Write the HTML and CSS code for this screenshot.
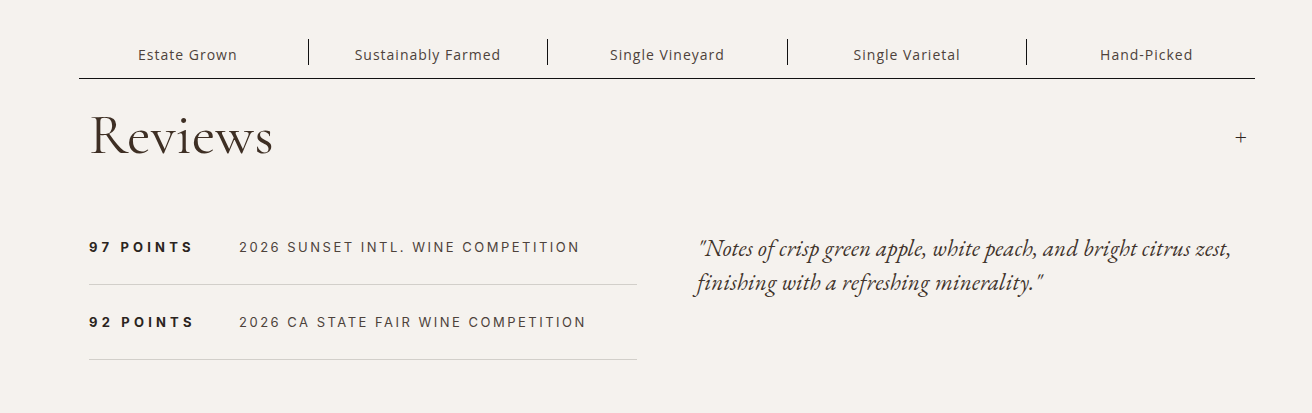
FILE: index.html
```html
<!DOCTYPE html>
<html lang="en">
<head>
  <meta charset="UTF-8">
  <meta name="viewport" content="width=device-width, initial-scale=1.0">
  <title>Reviews</title>
  <link rel="stylesheet" href="styles.css">
</head>
<body>
  <div class="page">

    <!-- Attributi del vino -->
    <div class="attributes">
      <ul class="attr-list">
        <li>Estate Grown</li>
        <li>Sustainably Farmed</li>
        <li>Single Vineyard</li>
        <li>Single Varietal</li>
        <li>Hand-Picked</li>
      </ul>
    </div>

    <!-- Sezione recensioni -->
    <section class="reviews">
      <div class="reviews-head">
        <h2>Reviews</h2>
        <span class="toggle">+</span>
      </div>

      <div class="reviews-body">
        <div class="awards">
          <div class="award">
            <div class="points">97 Points</div>
            <div class="contest">2026 Sunset Intl. Wine Competition</div>
          </div>
          <div class="award">
            <div class="points">92 Points</div>
            <div class="contest">2026 CA State Fair Wine Competition</div>
          </div>
        </div>

        <blockquote class="quote">"Notes of crisp green apple, white peach, and bright citrus zest, finishing with a refreshing minerality."</blockquote>
      </div>
    </section>

  </div>
</body>
</html>
```

FILE: styles.css
```css
body {
  margin: 0;
  background-color: #f5f2ee;
  color: #3f332b;
  font-family: "Open Sans", Arial, sans-serif;
}

.page {
  padding: 0 57px 0 79px;
}

/* Barra attributi */
.attributes {
  padding-top: 39px;
  height: 39px;
  border-bottom: 1px solid #111;
}

.attr-list {
  list-style: none;
  margin: 0 -11px;
  padding: 0;
  display: grid;
  grid-template-columns: repeat(5, 1fr);
}

.attr-list li {
  height: 20px;
  padding-top: 6px;
  text-align: center;
  font-size: 14px;
  letter-spacing: 1px;
  color: #4d423b;
  line-height: 20px;
}

.attr-list li + li {
  border-left: 1px solid #111;
}

/* Recensioni */
.reviews {
  padding: 0 8px 0 10px;
}

.reviews-head {
  display: flex;
  justify-content: space-between;
  align-items: center;
  height: 115px;
}

.reviews-head h2 {
  margin: 0;
  font-family: "Cormorant Garamond", "EB Garamond", "Liberation Serif", serif;
  font-weight: normal;
  font-size: 58px;
  color: #3e2f24;
  margin-bottom: 4px;
}

.toggle {
  font-size: 22px;
  font-weight: 300;
  color: #2f2620;
  margin-bottom: 2px;
}

.reviews-body {
  display: grid;
  grid-template-columns: 548px 1fr;
  column-gap: 58px;
  padding-top: 16px;
}

.award {
  display: flex;
  align-items: center;
  height: 74px;
  border-bottom: 1px solid #d2cfca;
}

.points {
  width: 150px;
  font-family: Inter, "Liberation Sans", sans-serif;
  font-weight: bold;
  font-size: 13px;
  letter-spacing: 4.2px;
  text-transform: uppercase;
  color: #2b2420;
}

.contest {
  font-family: Inter, "Liberation Sans", sans-serif;
  font-size: 13px;
  letter-spacing: 2.5px;
  text-transform: uppercase;
  color: #4d423b;
}

.quote {
  margin: 21px 0 0;
  padding-left: 2px;
  font-family: "EB Garamond", "Cormorant Garamond", "Liberation Serif", serif;
  font-style: italic;
  font-size: 23px;
  line-height: 34px;
  letter-spacing: 0.2px;
  color: #3f332b;
}
```
